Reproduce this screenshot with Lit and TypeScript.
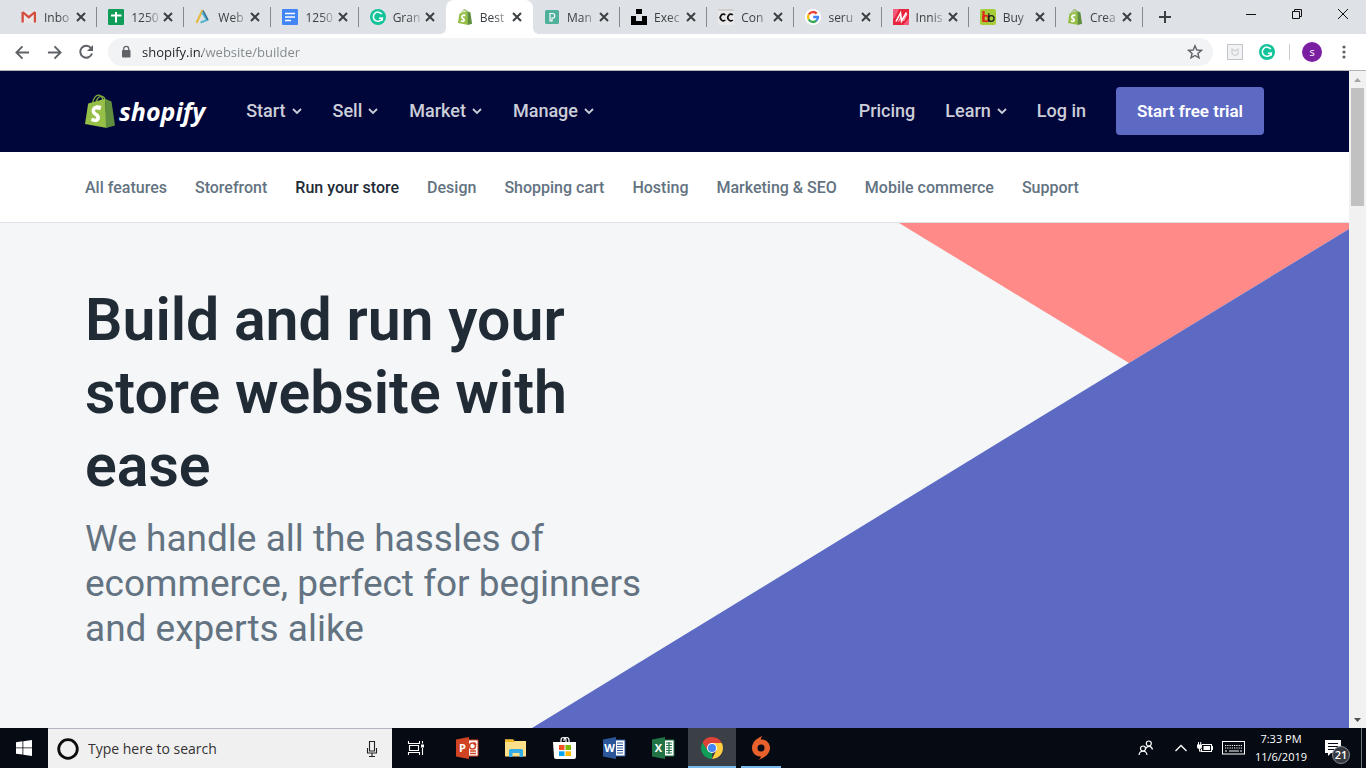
import { LitElement, html, svg, css, nothing, type TemplateResult } from "lit";
import { customElement } from "lit/decorators.js";
import { classMap } from "lit/directives/class-map.js";

const shopifyBag = html`<svg viewBox="0 0 30 34" class="icon" aria-hidden="true">
  <path d="M7.500 10C8 4.500 11 .800 14 1.200C17 1.600 18 5 18 9M11 9C11.500 5 14 2 17 2.400C19 2.800 20 5 20.300 7" fill="none" stroke="#7ba63c" stroke-width="1.400"/>
  <path d="M3.200 9.600 20 4.700 22 34 0 30Z" fill="#96bf47"/>
  <path d="M20 4.700 23 6 26.500 7.500 30 31.500 21 34Z" fill="#5e8e3e"/>
  <path d="M16.500 12 15.200 16.200C11.500 14.800 9.800 15.500 10 17C10.200 18.800 15 19.200 15 23.600C15 27.800 11 29.800 6 26.800L7 23.400C10 25.400 11.500 24.600 11.200 23.400C10.900 21.600 6.600 21 6.600 17C6.600 12.600 11 10 16.500 12Z" fill="#fff"/>
</svg>`;

const grammarly = html`<svg viewBox="0 0 16 16" class="icon" aria-hidden="true">
  <circle cx="8" cy="8" r="8" fill="#15c39a"/>
  <path d="M11.800 5.200A4.600 4.600 0 1 0 12.300 9.200H9" fill="none" stroke="#fff" stroke-width="1.500"/>
  <path d="M12.300 8.600V11.800" stroke="#fff" stroke-width="1.300"/>
</svg>`;

const icons: Record<string, TemplateResult> = {
  gmail: html`<svg viewBox="0 0 16 16" class="icon" aria-hidden="true">
    <path d="M1 2.500H14.500V14H1Z" fill="#e8e6e6"/>
    <path d="M1.500 3 7.800 8.200 14 3" fill="none" stroke="#d54b3d" stroke-width="2.200"/>
    <path d="M.500 3V13.500H2.800V3ZM12.800 3V13.500H15V3Z" fill="#d54b3d"/>
  </svg>`,
  sheets: html`<svg viewBox="0 0 16 16" class="icon" aria-hidden="true">
    <rect width="16" height="16" rx="1" fill="#0f9d58"/>
    <path d="M8 3V13.500M3 6.500H13.500" stroke="#fff" stroke-width="2"/>
  </svg>`,
  prism: html`<svg viewBox="0 0 16 16" class="icon" aria-hidden="true">
    <path d="M7.500 1 1.500 14" stroke="#e8b83e" stroke-width="2"/>
    <path d="M7 3.500 12 11 5.500 13.500" fill="none" stroke="#58b7cf" stroke-width="2.200"/>
    <path d="M8 1.500 13 11" stroke="#2b6c8e" stroke-width="1.500"/>
  </svg>`,
  docs: html`<svg viewBox="0 0 16 16" class="icon" aria-hidden="true">
    <rect width="16" height="16" rx="1" fill="#4285f4"/>
    <path d="M3 4.500H13M3 8H13M3 11.500H9" stroke="#fff" stroke-width="1.700"/>
  </svg>`,
  grammarly,
  shopify: shopifyBag,
  pexels: html`<svg viewBox="0 0 16 16" class="icon" aria-hidden="true">
    <rect x="1" y="1" width="14" height="14" rx="1.500" fill="#4fb09c"/>
    <path d="M6 12V4.500H8.500A2.200 2.200 0 0 1 8.500 9H8V12Z" fill="none" stroke="#fff" stroke-width="1.200"/>
  </svg>`,
  unsplash: html`<svg viewBox="0 0 16 16" class="icon" aria-hidden="true">
    <path d="M5 0H11V5H5ZM0 7H5V12H11V7H16V16H0Z" fill="#000"/>
  </svg>`,
  cc: html`<svg viewBox="0 0 16 16" class="icon" aria-hidden="true">
    <rect width="16" height="16" fill="#e9e9ea"/>
    <path d="M0 1H16" stroke="#b5b5b5" stroke-width="1"/>
    <path d="M7.300 6A3 3.300 0 1 0 7.300 11M14.800 6A3 3.300 0 1 0 14.800 11" fill="none" stroke="#111" stroke-width="1.700"/>
  </svg>`,
  google: html`<svg viewBox="0 0 16 16" class="icon" aria-hidden="true">
    <circle cx="8" cy="8" r="8" fill="#fff"/>
    <g fill="none" stroke-width="2.300">
      <path d="M3.700 5.500A5 5 0 0 1 11.700 4.600" stroke="#ea4335"/>
      <path d="M3.700 10.500A5 5 0 0 1 3.700 5.500" stroke="#fbbc05"/>
      <path d="M11.400 11.700A5 5 0 0 1 3.700 10.500" stroke="#34a853"/>
      <path d="M8.200 8H13A5 5 0 0 1 11.400 11.700" stroke="#4285f4"/>
    </g>
  </svg>`,
  innis: html`<svg viewBox="0 0 16 16" class="icon" aria-hidden="true">
    <rect width="16" height="16" fill="#e8243c"/>
    <path d="M0 0H6L2 8 0 10ZM10 16 16 9V16Z" fill="#f55a7c"/>
    <path d="M3 12.500 7.500 4 8.500 12 13.500 3.500" fill="none" stroke="#fff" stroke-width="1.600"/>
    <path d="M5.500 12.500 8 7.500M10.500 12 14 5" stroke="#fff" stroke-width=".800"/>
  </svg>`,
  basket: html`<svg viewBox="0 0 16 16" class="icon" aria-hidden="true">
    <rect width="16" height="16" rx="2" fill="#a5cd39"/>
    <path d="M3.500 2V13" stroke="#e0251b" stroke-width="2.200"/>
    <circle cx="5.800" cy="9.500" r="2.800" fill="none" stroke="#e0251b" stroke-width="1.800"/>
    <path d="M8.800 4V13" stroke="#222" stroke-width="1.200"/>
    <circle cx="11.300" cy="9.500" r="2.800" fill="none" stroke="#222" stroke-width="1.300"/>
  </svg>`,
};

const line = (d: string, size = 16, width = 2) => html`<svg class="line" width=${size} height=${size} viewBox="0 0 16 16" aria-hidden="true">${svg`<path d=${d} fill="none" stroke="currentColor" stroke-width=${width}/>`}</svg>`;

const office = (letter: string, color: string, detail: TemplateResult) => html`<svg width="24" height="24" viewBox="0 0 24 24" aria-hidden="true">
  <path d="M11 4H23V20H11Z" fill="#fff" stroke=${color} stroke-width="1"/>
  ${detail}
  <path d="M1 3.500 14 1V23L1 20.500Z" fill=${color}/>
  <text x="7.500" y="16" text-anchor="middle" font-family="Open Sans, sans-serif" font-weight="700" font-size="11" fill="#fff">${letter}</text>
</svg>`;

const tabs = [
  { icon: "gmail", title: "Inbo" },
  { icon: "sheets", title: "1250" },
  { icon: "prism", title: "Web" },
  { icon: "docs", title: "1250" },
  { icon: "grammarly", title: "Gran" },
  { icon: "shopify", title: "Best", active: true },
  { icon: "pexels", title: "Man" },
  { icon: "unsplash", title: "Exec" },
  { icon: "cc", title: "Con" },
  { icon: "google", title: "seru" },
  { icon: "innis", title: "Innis" },
  { icon: "basket", title: "Buy" },
  { icon: "shopify", title: "Crea" },
];

@customElement("browser-tabs")
export class BrowserTabs extends LitElement {
  static styles = css`
    :host { display: flex; align-items: flex-start; height: 34px; padding-left: 10px; background: #dee1e6; color: #3c4043; font-family: "Open Sans", "Noto Sans", sans-serif; font-size: 12px; }
    button { border: 0; padding: 0; margin: 0; background: none; color: inherit; font: inherit; display: flex; align-items: center; justify-content: center; }
    .tabs { display: flex; flex: 0 1 1133px; min-width: 0; height: 34px; }
    .tab { flex: 1 1 0; min-width: 0; display: flex; align-items: center; padding: 0 8px 0 11px; position: relative; }
    .tab.ruled::after { content: ""; position: absolute; right: 0; top: 7px; width: 1px; height: 20px; background: #85888d; }
    .title { flex: 1; min-width: 0; gap: 7px; justify-content: flex-start; height: 34px; }
    .label { flex: 1; min-width: 0; white-space: nowrap; text-align: left; mask-image: linear-gradient(90deg, #000 50%, transparent 110%); }
    .icon { width: 16px; height: 16px; flex: none; }
    .close { width: 16px; height: 16px; }
    .active { background: #fff; border-radius: 8px 8px 0 0; }
    .active::before, .active::after { content: ""; position: absolute; bottom: 0; width: 6px; height: 6px; }
    .active::before { left: -6px; background: radial-gradient(circle at 0 0, transparent 6px, #fff 6px); }
    .active::after { right: -6px; background: radial-gradient(circle at 100% 0, transparent 6px, #fff 6px); }
    .new { width: 24px; height: 34px; margin-left: 10px; }
    .window { display: flex; margin-left: auto; color: #111; }
    .window button { width: 46px; height: 28px; }
  `;

  render() {
    return html`
      <div class="tabs" role="tablist">
        ${tabs.map((t, i) => html`
          <div class=${classMap({ tab: true, active: !!t.active, ruled: !t.active && !tabs[i + 1]?.active })}>
            <button class="title" role="tab" aria-selected=${t.active ? "true" : "false"}>${icons[t.icon]}<span class="label">${t.title}</span></button>
            <button class="close" aria-label="Close tab">${line("M4 4 12 12M12 4 4 12", 16, 2)}</button>
          </div>`)}
      </div>
      <button class="new" aria-label="New tab">${line("M8 2V14M2 8H14", 16, 2)}</button>
      <div class="window">
        <button aria-label="Minimise">${line("M3 8.500H13", 16, 1)}</button>
        <button aria-label="Restore">${line("M3.500 5.500H10.500V12.500H3.500ZM5.500 5V3.500H12.500V10.500H11", 16, 1)}</button>
        <button aria-label="Close">${line("M3 3 13 13M13 3 3 13", 16, 1)}</button>
      </div>`;
  }
}

@customElement("browser-toolbar")
export class BrowserToolbar extends LitElement {
  static styles = css`
    :host { display: flex; align-items: center; height: 36px; padding: 0 10px; background: #fff; border-bottom: 1px solid #b6b4b6; color: #5f6368; font-family: "Open Sans", "Noto Sans", sans-serif; }
    button { border: 0; padding: 0; background: none; color: inherit; font: inherit; display: flex; align-items: center; justify-content: center; width: 24px; height: 28px; flex: none; }
    .nav { display: flex; gap: 8px; margin-right: 10px; }
    .address { flex: 1; min-width: 0; display: flex; align-items: center; height: 28px; border-radius: 14px; background: #f1f3f4; padding: 0 6px 0 12px; gap: 10px; }
    .url { flex: 1; min-width: 0; border: 0; padding: 0; outline: 0; height: 28px; font: inherit; font-size: 13px; color: transparent; background: linear-gradient(90deg, #202124 60px, #80868b 60px); -webkit-background-clip: text; background-clip: text; }
    .extensions { display: flex; align-items: center; gap: 8px; margin-left: 10px; }
    .icon { width: 16px; height: 16px; }
    .rule { width: 1px; height: 16px; background: #c8cacd; margin: 0 2px; }
    .avatar span { width: 20px; height: 20px; border-radius: 50%; background: #7b1fa2; color: #fff; font-size: 11px; line-height: 19px; }
  `;

  render() {
    return html`
      <div class="nav">
        <button aria-label="Back">${line("M15 8H2M8 1.500 1.500 8 8 14.500", 15, 2)}</button>
        <button aria-label="Forward">${line("M1 8H14M8 1.500 14.500 8 8 14.500", 15, 2)}</button>
        <button aria-label="Reload"><svg width="16" height="16" viewBox="0 0 16 16" aria-hidden="true"><path d="M13 4A6 6 0 1 0 14 9.500" fill="none" stroke="currentColor" stroke-width="2"/><path d="M15 1V7H9Z" fill="currentColor"/></svg></button>
      </div>
      <div class="address">
        <svg width="12" height="14" viewBox="0 0 12 14" aria-hidden="true"><rect x="2" y="5" width="8.500" height="7.500" rx="1" fill="currentColor"/><path d="M3.700 6V3.800A2.500 2.500 0 0 1 8.700 3.800V6" fill="none" stroke="currentColor" stroke-width="1.300"/></svg>
        <input class="url" aria-label="Address" .value=${"shopify.in/website/builder"} />
        <button aria-label="Bookmark this page"><svg width="16" height="16" viewBox="0 0 16 16" aria-hidden="true"><path d="M8 1.800 9.800 6 14.400 6.400 10.900 9.400 12 13.900 8 11.500 4 13.900 5.100 9.400 1.600 6.400 6.200 6Z" fill="none" stroke="currentColor" stroke-width="1.400"/></svg></button>
      </div>
      <div class="extensions">
        <button aria-label="Site safety"><svg width="16" height="16" viewBox="0 0 16 16" aria-hidden="true"><rect x=".500" y=".500" width="15" height="15" fill="#f2f3f4" stroke="#c1c4c8"/><path d="M5 5 8 7 11 5V10L8 11.500 5 10Z" fill="none" stroke="#d0d2d5" stroke-width="1.300"/></svg></button>
        <button aria-label="Grammarly">${grammarly}</button>
        <span class="rule"></span>
        <button class="avatar" aria-label="Profile"><span>s</span></button>
        <button aria-label="Menu"><svg width="16" height="16" viewBox="0 0 16 16" aria-hidden="true"><g fill="currentColor"><circle cx="8" cy="3" r="1.600"/><circle cx="8" cy="8" r="1.600"/><circle cx="8" cy="13" r="1.600"/></g></svg></button>
      </div>`;
  }
}

const caret = html`<svg width="10" height="8" viewBox="0 0 10 8" aria-hidden="true"><path d="M1 2 5 6 9 2" fill="none" stroke="currentColor" stroke-width="1.800"/></svg>`;

@customElement("shop-page")
export class ShopPage extends LitElement {
  static styles = css`
    :host { display: flex; flex-direction: column; min-width: 0; overflow: hidden; font-family: Roboto, sans-serif; background: #f4f6f8; }
    a { color: inherit; text-decoration: none; white-space: nowrap; }
    button { border: 0; padding: 0; background: none; color: inherit; font: inherit; display: flex; align-items: center; gap: 6px; }
    .header { display: flex; align-items: center; padding: 16px 85px 17px; background: #000639; color: #ccced9; font-size: 18px; line-height: 24px; font-weight: 500; flex: none; }
    .logo { display: flex; align-items: center; gap: 4px; margin-right: 41px; color: #fff; font-family: "Open Sans", sans-serif; font-size: 25px; font-weight: 700; font-style: italic; line-height: 34px; }
    .icon { width: 30px; height: 34px; }
    .menu { display: flex; align-items: center; gap: 31px; }
    .account { margin-left: auto; gap: 30px; }
    .trial { display: flex; align-items: center; height: 48px; padding: 0 21px; border-radius: 4px; background: #5c6ac4; color: #fff; font-weight: 600; font-size: 17px; }
    .subnav { display: flex; align-items: center; gap: 28px; padding: 24px 85px 22px; background: #fff; border-bottom: 1px solid #dfe3e8; color: #637381; font-size: 16px; font-weight: 500; line-height: 24px; flex: none; }
    .current { color: #212b36; }
    .hero { position: relative; flex: 1; padding: 60px 85px 0; }
    .art { position: absolute; inset: 0; width: 100%; height: 100%; }
    .copy { position: relative; max-width: 580px; }
    h1 { margin: 0; color: #212b36; font-size: 59px; font-weight: 600; line-height: 73px; }
    p { margin: 14px 0 0; color: #637381; font-size: 37px; line-height: 45px; }
  `;

  render() {
    const sub = ["All features", "Storefront", "Run your store", "Design", "Shopping cart", "Hosting", "Marketing & SEO", "Mobile commerce", "Support"];
    return html`
      <header class="header">
        <a class="logo" href="#">${shopifyBag}<span>shopify</span></a>
        <nav class="menu" aria-label="Main">
          ${["Start", "Sell", "Market", "Manage"].map((t) => html`<button>${t}${caret}</button>`)}
        </nav>
        <nav class="menu account" aria-label="Account">
          <a href="#">Pricing</a>
          <button>Learn${caret}</button>
          <a href="#">Log in</a>
          <a class="trial" href="#">Start free trial</a>
        </nav>
      </header>
      <nav class="subnav" aria-label="Features">
        ${sub.map((t) => html`<a href="#" class=${t === "Run your store" ? "current" : ""} aria-current=${t === "Run your store" ? "page" : nothing}>${t}</a>`)}
      </nav>
      <section class="hero">
        <svg class="art" viewBox="0 0 1349 505" preserveAspectRatio="none" aria-hidden="true">
          <path d="M899 0H1349V6L1129 140Z" fill="#ff8a87"/>
          <path d="M1349 6V505H532L1129 140Z" fill="#5c6ac4"/>
        </svg>
        <div class="copy">
          <h1>Build and run your store website with ease</h1>
          <p>We handle all the hassles of ecommerce, perfect for beginners and experts alike</p>
        </div>
      </section>`;
  }
}

@customElement("page-scrollbar")
export class PageScrollbar extends LitElement {
  static styles = css`
    :host { display: flex; flex-direction: column; width: 17px; background: #f1f1f1; }
    .arrow { display: flex; align-items: center; justify-content: center; width: 17px; height: 17px; border: 0; padding: 0; background: none; }
    .track { flex: 1; padding: 0 2px; }
    .thumb { height: 19%; background: #c1c1c1; }
  `;

  render() {
    return html`
      <button class="arrow" aria-label="Scroll up"><svg width="7" height="4" viewBox="0 0 7 4"><path d="M0 4 3.500 0 7 4Z" fill="#a3a3a3"/></svg></button>
      <div class="track"><div class="thumb"></div></div>
      <button class="arrow" aria-label="Scroll down"><svg width="7" height="4" viewBox="0 0 7 4"><path d="M0 0H7L3.500 4Z" fill="#505050"/></svg></button>`;
  }
}

@customElement("task-bar")
export class TaskBar extends LitElement {
  static styles = css`
    :host { display: flex; height: 40px; background: #060b13; color: #fff; font-family: "Open Sans", "Noto Sans", sans-serif; }
    button { border: 0; padding: 0; background: none; color: inherit; font: inherit; display: flex; align-items: center; justify-content: center; width: 48px; flex: none; }
    .search { display: flex; align-items: center; flex: 0 1 344px; min-width: 0; box-sizing: border-box; padding: 0 12px 0 8px; gap: 8px; background: #f0f0f0; border-top: 1px solid #b4b7bf; color: #222; }
    .search svg { flex: none; }
    .query { flex: 1; min-width: 0; border: 0; outline: 0; padding: 0; background: none; font: inherit; font-size: 14px; }
    .query::placeholder { color: #333; opacity: 1; }
    .search button { width: 16px; }
    .apps { display: flex; gap: 1px; margin-left: 3px; }
    .open { box-shadow: inset 0 -2px #76b9ed; margin: 0 4px; width: 40px; }
    .focused { background: #3b3f46; margin: 0; width: 48px; }
    .tray { display: flex; align-items: center; margin-left: auto; }
    .tray button { width: auto; height: 40px; }
    .status { display: flex; gap: 9px; }
    .tray .people { margin-right: 20px; }
    .tray .clock { flex-direction: column; width: 72px; font-size: 11px; line-height: 18px; }
    .tray .notices { width: 32px; margin-right: 12px; position: relative; }
    .badge { position: absolute; left: 15px; top: 18px; width: 18px; height: 18px; box-sizing: border-box; border: 1px solid #8a8d92; border-radius: 50%; background: #35393f; font-size: 11px; font-weight: 600; line-height: 15px; text-align: center; }
    .desktop { width: 4px; height: 40px; border-left: 1px solid #70757c; }
  `;

  render() {
    return html`
      <button aria-label="Start"><svg width="16" height="16" viewBox="0 0 16 16"><path d="M0 2.200 6.500 1.300V7.500H0ZM7.300 1.200 16 0V7.500H7.300ZM0 8.300H6.500V14.600L0 13.700ZM7.300 8.300H16V16L7.300 14.800Z" fill="#fff"/></svg></button>
      <div class="search">
        <svg width="24" height="24" viewBox="0 0 24 24"><circle cx="12" cy="12" r="9.300" fill="none" stroke="#0b0b0b" stroke-width="2.800"/></svg>
        <input class="query" type="search" aria-label="Search" placeholder="Type here to search" />
        <button aria-label="Speak"><svg width="16" height="18" viewBox="0 0 16 18"><path d="M5.500 1.500H10.500V11H5.500ZM3.500 8V13H12.500V8M8 13V16.500M5 16.500H11" fill="none" stroke="#222" stroke-width="1.100"/></svg></button>
      </div>
      <button aria-label="Task view"><svg width="18" height="18" viewBox="0 0 18 18"><path d="M1.500 2V4.500H12.500V2M2.500 6.500H11.500V11.500H2.500ZM1.500 16V13.500H12.500V16M15.500 2V4.500M15.500 9V16" fill="none" stroke="#fff" stroke-width="1.100"/><rect x="14" y="5.500" width="3" height="3" fill="#fff"/></svg></button>
      <div class="apps">
        <button aria-label="PowerPoint">${office("P", "#d04423", html`${svg`<path d="M15 15H21M15 17.500H21" stroke="#d04423" stroke-width="1.300"/><circle cx="17.500" cy="10" r="3" fill="none" stroke="#d04423" stroke-width="1.500"/><path d="M18.500 9V6A3 3 0 0 1 21.500 9Z" fill="#d04423"/>`}`)}</button>
        <button aria-label="File Explorer"><svg width="24" height="24" viewBox="0 0 24 24"><path d="M1 3.500H9L10.500 5H22V20.500H1Z" fill="#ffe08a"/><path d="M1 3.500H9L10.500 5V6H1Z" fill="#f3b724"/><path d="M5 21V14.500A1.500 1.500 0 0 1 6.500 13H17.500A1.500 1.500 0 0 1 19 14.500V21H15.500V17H8.500V21Z" fill="#35aee8"/></svg></button>
        <button aria-label="Store"><svg width="24" height="24" viewBox="0 0 24 24"><path d="M8 7V4A2.500 2.500 0 0 1 13 4V6M11 5V4A2.500 2.500 0 0 1 16 4V7" fill="none" stroke="#fff" stroke-width="1.200"/><path d="M0 6H23V21A2 2 0 0 1 21 23H3A2 2 0 0 1 1 21Z" fill="#fff"/><path d="M6 9H11.500V14H6Z" fill="#f25022"/><path d="M12.500 9H18V14H12.500Z" fill="#7fba00"/><path d="M6 15.300H11.500V20H6Z" fill="#00a4ef"/><path d="M12.500 15.300H18V20H12.500Z" fill="#ffb900"/></svg></button>
        <button aria-label="Word">${office("W", "#2b579a", html`${svg`<path d="M15 7H21M15 9.500H21M15 12H21M15 14.500H21M15 17H21" stroke="#2b579a" stroke-width="1.200"/>`}`)}</button>
        <button aria-label="Excel">${office("X", "#217346", html`${svg`<path d="M15 7H21M15 9.500H21M15 12H21M15 14.500H21M15 17H21M18 6V18" stroke="#217346" stroke-width="1.200"/>`}`)}</button>
        <button class="open focused" aria-label="Chrome"><svg width="24" height="24" viewBox="0 0 24 24"><path d="M12 12V23A11 11 0 0 1 2.500 6.500Z" fill="#0f9d58"/><path d="M12 7H21.800A11 11 0 0 0 2.500 6.500L7.700 14.500Z" fill="#db4437"/><path d="M12 7H21.800A11 11 0 0 1 12 23L16.300 14.500Z" fill="#ffcd40"/><circle cx="12" cy="12" r="5" fill="#fff"/><circle cx="12" cy="12" r="4" fill="#4285f4"/></svg></button>
        <button class="open" aria-label="Origin"><svg width="20" height="24" viewBox="0 0 20 24"><path d="M11.500 0C10 1.500 9.800 2.500 9.800 3.500C15 3.200 19 7 19 12C19 18 13 22 7.500 24C9.300 22.500 9.800 21.500 9.900 20.400C5 20.800 1 17 1 12C1 6 6 2 11.500 0ZM10 8.500A3.500 3.500 0 1 0 10 15.500A3.500 3.500 0 1 0 10 8.500Z" fill="#e8612c" fill-rule="evenodd"/></svg></button>
      </div>
      <div class="tray">
        <button class="people" aria-label="People"><svg width="16" height="16" viewBox="0 0 16 16"><g fill="none" stroke="#fff" stroke-width="1.200"><circle cx="10.800" cy="3.500" r="2.500"/><path d="M8 8.500C9 5.500 13.500 5.500 14.500 9.500"/><circle cx="5" cy="8.500" r="2.500"/><path d="M1 15C1.500 10 8.500 10 9 15"/></g></svg></button>
        <div class="status">
          <button aria-label="Show hidden icons"><svg width="14" height="16" viewBox="0 0 14 16"><path d="M1.500 11 7 5.500 12.500 11" fill="none" stroke="#fff" stroke-width="1.300"/></svg></button>
          <button aria-label="Battery"><svg width="16" height="14" viewBox="0 0 16 14"><path d="M5 3.500H14.500V10.500H4.500V8M14.500 5.500H15.500V8.500H14.500" fill="none" stroke="#fff" stroke-width="1.100"/><path d="M6.500 5H13V9H6.500ZM0 3.500H5V5.500A2.500 2.500 0 0 1 0 5.500ZM1 1H2V3.500H1ZM3.200 1H4.200V3.500H3.200ZM2 7.500H3V10.500H2ZM2 9.500H5V10.500H2Z" fill="#fff"/></svg></button>
          <button aria-label="Touch keyboard"><svg width="23" height="14" viewBox="0 0 23 14"><rect x=".500" y=".500" width="22" height="12.500" fill="none" stroke="#fff"/><path d="M3 4.500H20M3 7H20" stroke="#fff" stroke-width="1.200" stroke-dasharray="1.200 1.060"/><path d="M3 10H5M7 10H17M18 10H20" stroke="#fff" stroke-width="1.200"/></svg></button>
        </div>
        <button class="clock"><span>7:33 PM</span><span>11/6/2019</span></button>
        <button class="notices" aria-label="Notifications"><svg width="16" height="16" viewBox="0 0 16 16"><path d="M0 0H16V13H6L3 16V13H0Z" fill="#fff"/><path d="M3 3.500H13M3 6.500H13M3 9.500H9" stroke="#060b13" stroke-width="1.200"/></svg><span class="badge">21</span></button>
        <span class="desktop"></span>
      </div>`;
  }
}

@customElement("app-root")
export class AppRoot extends LitElement {
  static styles = css`
    :host { display: flex; flex-direction: column; height: 100vh; overflow: hidden; }
    .viewport { display: flex; flex: 1; min-height: 0; }
    .page { flex: 1; }
  `;

  render() {
    return html`
      <browser-tabs></browser-tabs>
      <browser-toolbar></browser-toolbar>
      <main class="viewport">
        <shop-page class="page"></shop-page>
        <page-scrollbar></page-scrollbar>
      </main>
      <task-bar></task-bar>`;
  }
}
